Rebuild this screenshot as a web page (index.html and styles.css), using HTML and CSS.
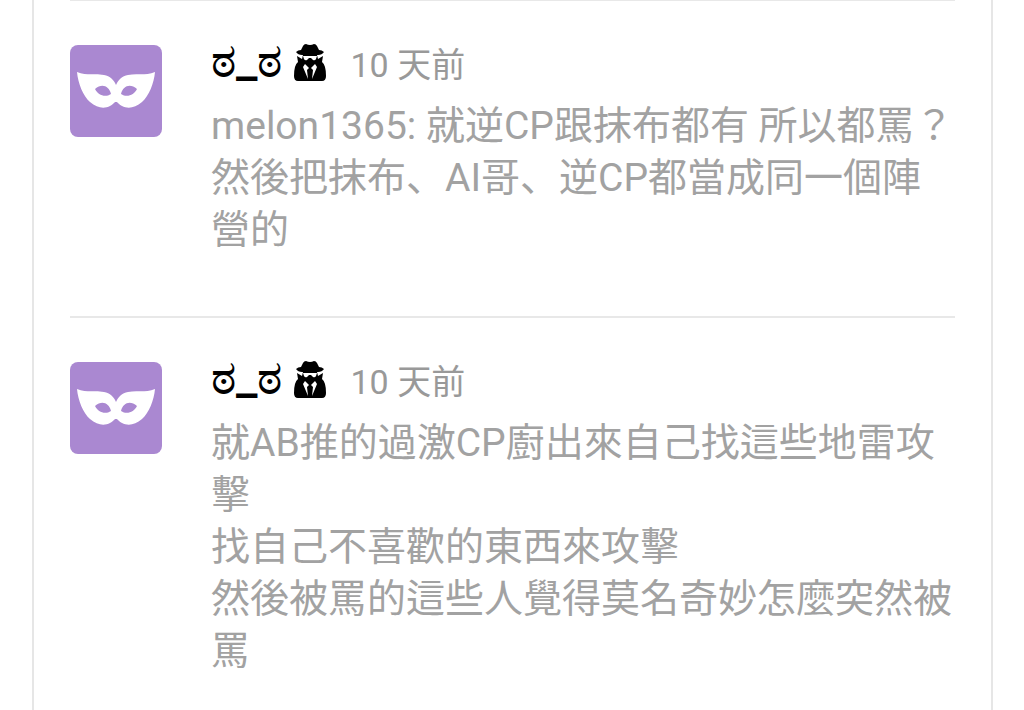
FILE: index.html
```html
<!DOCTYPE html>
<html lang="ja">
<head>
<meta charset="utf-8">
<meta name="viewport" content="width=device-width, initial-scale=1">
<title>留言</title>
<link rel="stylesheet" href="styles.css">
</head>
<body>
<svg class="defs" aria-hidden="true">
  <symbol id="mask" viewBox="0 0 92 92"><path fill="#fff" fill-rule="evenodd" d="M7 27C17 31 26 28 34 30C40 31 44 35 46 40C48 35 52 31 58 30C66 28 75 31 85 27C84 38 79 51 72 57C65 63 58 64 52 61C48 59 48 57 46 57C44 57 44 59 40 61C34 64 27 63 20 57C13 51 8 38 7 27ZM25 44C28 50 35 53 41 49C39 41 32 38 25 44ZM67 44C64 50 57 53 51 49C53 41 60 38 67 44Z"/></symbol>
  <symbol id="spy" viewBox="0 0 34 40"><path d="M3 9Q5 7 8 7L10 3Q11 1 13 1Q17 3 21 1Q23 1 24 3L26 7Q29 7 31 9Q29 12 25 12H24L25 16L30 13L29 19Q33 22 33 33Q33 38 29 38H5Q1 38 1 33Q1 22 5 19L4 13L9 16L10 12H9Q5 12 3 9Z"/><path fill="#fff" d="M10 13H24L23 16Q22 18 20 17L18 15H16L14 17Q12 18 11 16ZM12 21L16 25L14 27L15 36L10 24ZM22 21L18 25L20 27L19 36L24 24Z"/></symbol>
</svg>
<main class="thread">
  <article class="comment">
    <svg class="avatar" role="img" aria-label="avatar"><use href="#mask"/></svg>
    <div class="body">
      <header class="meta"><span class="name">ಠ_ಠ</span><svg class="spy" aria-hidden="true"><use href="#spy"/></svg><time class="time">10 天前</time></header>
      <p class="text">melon1365: 就逆CP跟抹布都有 所以都罵？<br>然後把抹布、AI哥、逆CP都當成同一個陣營的</p>
    </div>
  </article>
  <article class="comment">
    <svg class="avatar" role="img" aria-label="avatar"><use href="#mask"/></svg>
    <div class="body">
      <header class="meta"><span class="name">ಠ_ಠ</span><svg class="spy" aria-hidden="true"><use href="#spy"/></svg><time class="time">10 天前</time></header>
      <p class="text">就AB推的過激CP廚出來自己找這些地雷攻擊<br>找自己不喜歡的東西來攻擊<br>然後被罵的這些人覺得莫名奇妙怎麼突然被罵</p>
    </div>
  </article>
</main>
</body>
</html>
```
FILE: styles.css
```css
* { box-sizing: border-box; }
body { margin: 0; background: #fff; font-family: Roboto, "Noto Sans CJK JP", sans-serif; }
.defs { position: absolute; width: 0; height: 0; }
.thread { margin: 0 31px 0 32px; padding: 0 36px; min-height: 100vh; border: solid #e6e6e6; border-width: 0 2px; }
.comment { display: flex; gap: 49px; padding: 44px 0 60px; border-top: 2px solid #e8e8e8; }
.comment:first-child { border-top-width: 1px; }
.comment:last-child { padding-bottom: 24px; }
.avatar { flex: none; width: 92px; height: 92px; border-radius: 8px; background: #aa88d1; }
.body { flex: 1; min-width: 0; }
.meta { display: flex; align-items: center; height: 36px; }
.name { align-self: flex-start; font-size: 48px; font-weight: 500; line-height: 32px; color: #000; }
.spy { width: 34px; height: 40px; margin-left: 10px; }
.time { align-self: flex-start; margin-left: 24px; font-size: 34px; line-height: 40px; color: #999; }
.text { margin: 19px 0 0; font-size: 39px; line-height: 52px; color: #a2a2a2; }
```
